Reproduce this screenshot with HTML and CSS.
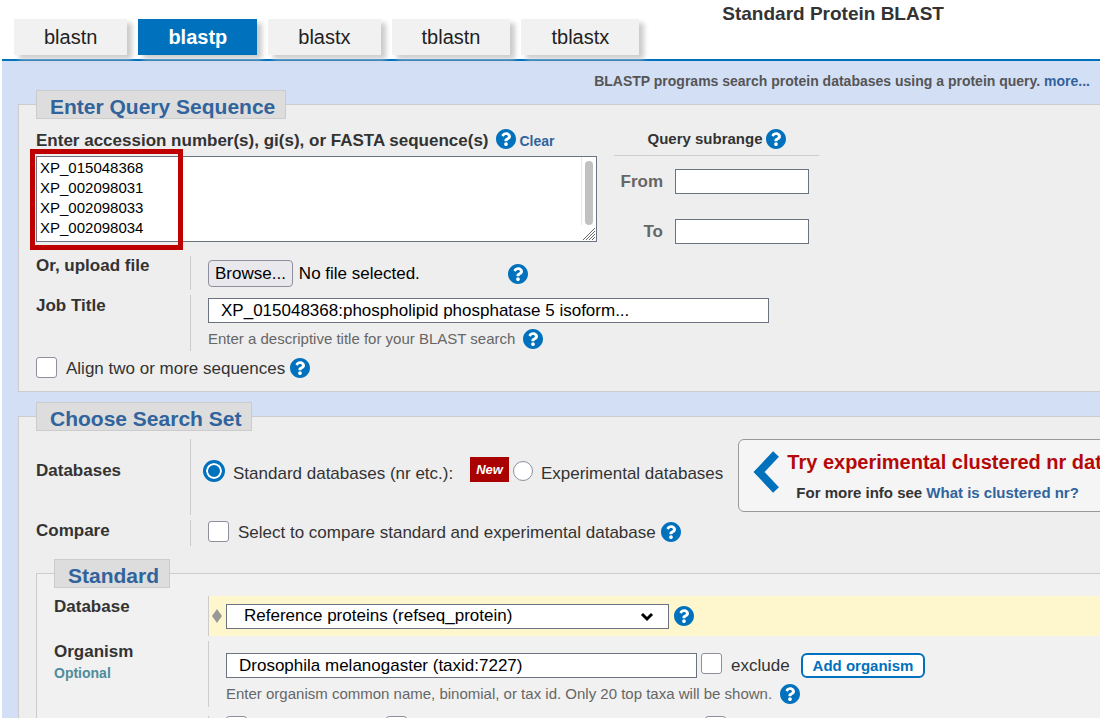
FILE: index.html
```html
<!DOCTYPE html>
<html lang="en">
<head>
<meta charset="utf-8">
<title>Standard Protein BLAST</title>
<link rel="stylesheet" href="styles.css">
</head>
<body>
<svg class="sprite" aria-hidden="true">
  <symbol id="help" viewBox="8 8 496 496">
    <circle cx="256" cy="256" r="220" fill="#fff"/>
    <path fill="#0071bc" d="M504 256c0 136.997-111.043 248-248 248S8 392.997 8 256C8 119.083 119.043 8 256 8s248 111.083 248 248zM262.655 90c-54.497 0-89.255 22.957-116.549 63.758-3.536 5.286-2.353 12.415 2.715 16.258l34.699 26.31c5.205 3.947 12.621 3.008 16.665-2.122 17.864-22.658 30.113-35.797 57.303-35.797 20.429 0 45.698 13.148 45.698 32.958 0 14.976-12.363 22.667-32.534 33.976C247.128 238.528 216 254.941 216 296v4c0 6.627 5.373 12 12 12h56c6.627 0 12-5.373 12-12v-1.333c0-28.462 83.186-29.647 83.186-106.667 0-58.002-60.165-102-116.531-102zM256 338c-25.365 0-46 20.635-46 46 0 25.364 20.635 46 46 46s46-20.636 46-46c0-25.364-20.635-46-46-46z"/>
  </symbol>
</svg>
<div class="page">
  <header class="top">
    <nav class="tabs">
      <a class="tab" href="#blastn">blastn</a>
      <a class="tab active" href="#blastp">blastp</a>
      <a class="tab" href="#blastx">blastx</a>
      <a class="tab" href="#tblastn">tblastn</a>
      <a class="tab" href="#tblastx">tblastx</a>
    </nav>
    <h1 class="title">Standard Protein BLAST</h1>
  </header>
  <form class="content">
    <p class="note">BLASTP programs search protein databases using a protein query. <a href="#more">more...</a></p>

    <fieldset class="box">
      <legend class="legend">Enter Query Sequence</legend>
      <div class="query">
        <div>
          <div class="query-head">
            <label class="name" for="seq">Enter accession number(s), gi(s), or FASTA sequence(s)</label>
            <a class="help" href="#h1" aria-label="Help"><svg><use href="#help"/></svg></a>
            <a class="clear" href="#clear">Clear</a>
          </div>
          <div class="seq-wrap">
            <textarea class="seq" id="seq" rows="4">XP_015048368
XP_002098031
XP_002098033
XP_002098034</textarea>
            <span class="track"><span class="thumb"></span></span>
            <svg class="grip" viewBox="0 0 14 14"><path d="M1 13L13 1M4 13l9-9M7 13l6-6M10 13l3-3" stroke="#666" stroke-width="1" fill="none"/></svg>
            <span class="marker"></span>
          </div>
        </div>
        <div class="range">
          <div class="range-head">Query subrange <a class="help" href="#h2" aria-label="Help"><svg><use href="#help"/></svg></a></div>
          <div class="range-fields">
            <label for="from">From</label><input class="field" id="from" type="text">
            <label for="to">To</label><input class="field" id="to" type="text">
          </div>
        </div>
      </div>
      <div class="row upload">
        <span class="name" id="file-label">Or, upload file</span>
        <div class="value">
          <div class="line">
            <button class="browse" type="button" aria-describedby="file-label">Browse...</button>
            <span class="no-file">No file selected.</span>
            <a class="help" href="#h3" aria-label="Help"><svg><use href="#help"/></svg></a>
          </div>
        </div>
      </div>
      <div class="row job">
        <label class="name" for="job">Job Title</label>
        <div class="value">
          <input class="field job-input" id="job" type="text" value="XP_015048368:phospholipid phosphatase 5 isoform...">
          <div class="hint">Enter a descriptive title for your BLAST search <a class="help" href="#h4" aria-label="Help"><svg><use href="#help"/></svg></a></div>
        </div>
      </div>
      <div class="line align">
        <input class="check" id="align" type="checkbox"><label for="align">Align two or more sequences</label>
        <a class="help" href="#h5" aria-label="Help"><svg><use href="#help"/></svg></a>
      </div>
    </fieldset>

    <fieldset class="box second">
      <legend class="legend">Choose Search Set</legend>
      <div class="row databases">
        <span class="name">Databases</span>
        <div class="value db-line">
          <input class="radio" id="std" type="radio" name="db" checked><label for="std">Standard databases (nr etc.):</label>
          <span class="new">New</span>
          <input class="radio" id="exp" type="radio" name="db"><label for="exp">Experimental databases</label>
          <aside class="promo">
            <svg class="chevron" viewBox="0 0 28 46"><path d="M23 5L6 23l17 18" fill="none" stroke="#0071bc" stroke-width="8"/></svg>
            <div>
              <div class="promo-title">Try experimental clustered nr database</div>
              <div class="promo-info">For more info see <a href="#nr">What is clustered nr?</a></div>
            </div>
          </aside>
        </div>
      </div>
      <div class="row compare">
        <span class="name">Compare</span>
        <div class="value">
          <div class="line">
            <input class="check" id="cmp" type="checkbox"><label for="cmp">Select to compare standard and experimental database</label>
            <a class="help" href="#h6" aria-label="Help"><svg><use href="#help"/></svg></a>
          </div>
        </div>
      </div>

      <fieldset class="box inner">
        <legend class="legend">Standard</legend>
        <div class="row database">
          <label class="name" for="database">Database</label>
          <div class="value highlight">
            <svg class="diamond" viewBox="0 0 10 14"><path d="M5 0l5 7-5 7-5-7z" fill="#999"/></svg>
            <span class="select-wrap">
              <select class="field select" id="database"><option>Reference proteins (refseq_protein)</option></select>
              <svg class="arrow" viewBox="0 0 14 10"><path d="M2 2l5 5 5-5" fill="none" stroke="#000" stroke-width="3"/></svg>
            </span>
            <a class="help" href="#h7" aria-label="Help"><svg><use href="#help"/></svg></a>
          </div>
        </div>
        <div class="row organism">
          <div class="name"><label for="org">Organism</label><div class="optional">Optional</div></div>
          <div class="value">
            <div class="org-line">
              <input class="field org-input" id="org" type="text" value="Drosophila melanogaster (taxid:7227)">
              <input class="check" id="excl" type="checkbox"><label for="excl">exclude</label>
              <button class="add" type="button">Add organism</button>
            </div>
            <div class="hint">Enter organism common name, binomial, or tax id. Only 20 top taxa will be shown. <a class="help" href="#h8" aria-label="Help"><svg><use href="#help"/></svg></a></div>
          </div>
        </div>
        <div class="row exclude">
          <span class="name"></span>
          <div class="value excludes">
            <input class="check" type="checkbox" aria-label="Models">
            <input class="check" type="checkbox" aria-label="Non-redundant proteins">
            <input class="check" type="checkbox" aria-label="Uncultured samples">
          </div>
        </div>
      </fieldset>
    </fieldset>
  </form>
</div>
</body>
</html>
```
FILE: styles.css
```css
* { box-sizing: border-box; }
html { height: 100%; overflow: hidden; }
body {
  height: 100%;
  margin: 0;
  overflow: hidden;
  background: #fff;
  color: #333;
  font: 17px/20px "Liberation Sans", Arial, sans-serif;
}
input, button, select, textarea { margin: 0; font: inherit; color: #000; }
a { color: #31639c; text-decoration: none; }
.sprite { display: none; }
.page { margin: 0 2px; height: 100%; overflow: hidden; }

.top {
  display: flex;
  align-items: flex-start;
  gap: 83px;
  height: 61px;
  padding-left: 12px;
  border-bottom: 2px solid #0071bc;
}
.tabs { display: flex; gap: 11px; padding-top: 19px; }
.tab {
  padding: 0 30px;
  background: #f1f1f1;
  color: #222;
  font-size: 20px;
  line-height: 36px;
  box-shadow: 5px 4px 5px #ccc;
}
.tab.active { background: #0071bc; color: #fff; font-weight: bold; }
.title { margin: 4px 0 0; font-size: 19px; line-height: 20px; white-space: nowrap; }

.content { padding-left: 16px; background: #d3dff5; }
.note {
  margin: 0;
  padding: 10px 10px 0 0;
  height: 29px;
  color: #555;
  font-size: 14px;
  font-weight: bold;
  text-align: right;
}

.box {
  min-width: 0;
  margin: 0;
  padding: 10px 0 13px 17px;
  background: #eee;
  border: 1px solid #ccc;
  border-right: 0;
}
.second { margin-top: 10px; padding-top: 8px; }
.inner { margin-top: 13px; padding-top: 3px; background: #f1f1f1; }
.legend {
  height: 29px;
  padding: 2px 10px 0 13px;
  background: #ddd;
  border: 1px solid #ccc;
  color: #31639c;
  font-size: 21px;
  font-weight: bold;
  line-height: 28px;
}
.name { font-weight: bold; }

.help { display: inline-flex; flex: none; width: 20px; height: 20px; }
.help svg { width: 20px; height: 20px; }

.field {
  height: 25px;
  background: #fff;
  border: 1px solid #6b7280;
  border-radius: 0;
}

.query { display: flex; gap: 17px; }
.query > div:first-child { width: 561px; }
.query-head { display: flex; align-items: center; gap: 4px; height: 20px; margin-bottom: 7px; }
.query-head .name { padding: 3px 3px 0 0; }
.clear { padding-top: 4px; font-size: 14px; font-weight: bold; }
.seq-wrap { position: relative; display: flex; }
.seq {
  flex: 1;
  height: 86px;
  padding: 1px 3px;
  border: 1px solid #6b7280;
  font-size: 15px;
  line-height: 20px;
  overflow: hidden;
  resize: none;
}
.track {
  position: absolute;
  top: 1px;
  right: 1px;
  width: 15px;
  height: 68px;
  padding: 4px 3px 0;
  border-left: 1px solid #e8e8e8;
}
.thumb { display: block; height: 64px; width: 8px; border-radius: 4px; background: #c1c1c1; }
.grip { position: absolute; right: 1px; bottom: 1px; width: 14px; height: 14px; }
.marker {
  position: absolute;
  top: -7px;
  left: -6px;
  width: 153px;
  height: 101px;
  border: 5px solid #bf0000;
}

.range { width: 205px; }
.range-head {
  display: flex;
  align-items: center;
  justify-content: center;
  gap: 3px;
  height: 27px;
  padding-bottom: 6px;
  border-bottom: 1px solid #ccc;
  font-size: 15px;
  font-weight: bold;
}
.range-fields {
  display: grid;
  grid-template-columns: 49px 134px;
  gap: 25px 12px;
  align-items: center;
  margin-top: 13px;
  color: #666;
  font-weight: bold;
  text-align: right;
}
.range-fields .field { width: 100%; }

.row { display: grid; grid-template-columns: 154px minmax(0, 1fr); margin-top: 5px; }
.value { padding-left: 17px; border-left: 1px solid #ccc; }
.line { display: flex; align-items: center; }
.upload { margin-top: 12px; }
.upload .value { height: 34px; padding-top: 4px; }
.browse {
  height: 27px;
  padding: 0 6px;
  background: #e9e9ed;
  border: 1px solid #8f8f9d;
  border-radius: 4px;
}
.no-file { flex: 0 0 215px; padding-left: 6px; color: #000; }
.job .name { line-height: 21px; }
.job .value { display: flex; flex-direction: column; padding-top: 3px; }
.job-input { width: 561px; padding: 0 12px; }
.hint {
  display: flex;
  align-items: center;
  gap: 8px;
  height: 28px;
  padding-top: 3px;
  color: #666;
  font-size: 15px;
}

.check {
  appearance: none;
  flex: none;
  width: 21px;
  height: 21px;
  background: #fff;
  border: 1px solid #8f8f9d;
  border-radius: 3px;
}
.check + label { padding: 3px 5px 0 9px; }
.align { margin-top: 6px; height: 21px; }

.databases { margin-top: 0; }
.databases .name { padding-top: 22px; }
.db-line { display: flex; align-items: center; height: 76px; padding: 0 0 12px 12px; white-space: nowrap; }
.radio {
  appearance: none;
  flex: none;
  width: 20px;
  height: 20px;
  border: 1px solid #8f8f9d;
  border-radius: 50%;
  background: #fff;
}
.radio:checked { width: 22px; height: 22px; border: 3px solid #0071bc; box-shadow: inset 0 0 0 2px #fff; background: #0071bc; }
.radio + label { padding: 5px 0 0 8px; }
.new {
  margin: 0 4px 4px 17px;
  padding: 0 6px;
  background: #a90000;
  color: #fff;
  font-size: 13px;
  font-style: italic;
  font-weight: bold;
  line-height: 25px;
}
.promo {
  display: flex;
  flex: 1 0 auto;
  align-self: flex-start;
  gap: 6px;
  height: 73px;
  margin: 0 0 0 15px;
  padding: 9px 14px;
  background: #f5f5f5;
  border: 1px solid #999;
  border-radius: 6px;
}
.chevron { width: 28px; height: 46px; }
.promo-title { padding-top: 1px; color: #b50909; font-size: 20px; font-weight: bold; line-height: 24px; }
.promo-info { padding: 9px 0 0 9px; font-size: 15px; font-weight: bold; }

.compare .value { height: 26px; }
.compare .name { padding-top: 1px; }

.highlight { display: flex; align-items: center; height: 40px; padding-left: 3px; background: #fef7ce; }
.diamond { width: 10px; height: 14px; margin-right: 4px; }
.select-wrap { position: relative; display: flex; width: 443px; margin-right: 5px; }
.select { appearance: none; width: 100%; padding: 0 30px 0 17px; }
.arrow { position: absolute; top: 8px; right: 15px; width: 14px; height: 10px; pointer-events: none; }
.organism .name, .database .name { padding-top: 1px; }
.optional { color: #4f8c9b; font-size: 14px; line-height: 22px; }
.organism .value { height: 66px; padding-top: 12px; }
.org-line { display: flex; align-items: flex-start; }
.org-input { width: 471px; padding: 0 12px; margin-right: 4px; }
.org-line label { color: #333; padding-right: 11px; }
.add {
  height: 25px;
  padding: 0 10px;
  background: #fff;
  border: 2px solid #0071bc;
  border-radius: 6px;
  color: #0071bc;
  font-size: 15px;
  font-weight: bold;
  line-height: 20px;
}
.exclude { margin-top: 9px; }
.excludes { display: grid; grid-template-columns: 160px 319px 21px; }
```
